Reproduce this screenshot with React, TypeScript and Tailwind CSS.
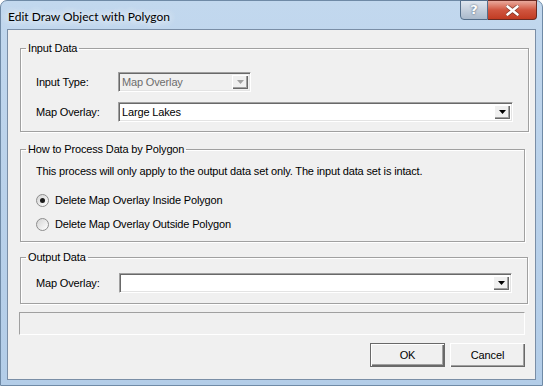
import React from 'react';

const sunken =
  'border border-t-[#a0a0a0] border-l-[#a0a0a0] border-b-white border-r-white shadow-[inset_1px_1px_0_#696969,inset_-1px_-1px_0_#e3e3e3]';
const raised =
  'bg-[#f0f0f0] shadow-[inset_1px_1px_0_#ffffff,inset_-1px_-1px_0_#696969,inset_-2px_-2px_0_#a0a0a0]';

const Arrow = ({ disabled }: { disabled?: boolean }) => (
  <svg width="7" height="4" viewBox="0 0 7 4">
    <path d="M0 0h7L3.5 4z" fill={disabled ? '#a0a0a0' : '#000'} />
  </svg>
);

const Combo = ({ value, width, disabled }: { value: string; width: string; disabled?: boolean }) => (
  <div className={`${width} h-[20px] flex items-stretch ${sunken} ${disabled ? 'bg-[#f0f0f0]' : 'bg-white'}`}>
    <div
      className={`flex-1 pl-[3px] flex items-center leading-[13px] ${disabled ? 'text-[#6d6d6d]' : 'text-black'}`}
    >
      {value}
    </div>
    <div className={`w-[16px] my-[2px] mr-[2px] flex items-center justify-center ${raised}`}>
      <Arrow disabled={disabled} />
    </div>
  </div>
);

const Group = ({ title, className, children }: { title: string; className: string; children: React.ReactNode }) => (
  <fieldset
    className={`ml-[12px] mr-[10px] border border-[#a0a0a0] shadow-[1px_1px_0_#ffffff,inset_1px_1px_0_#ffffff] ${className}`}
  >
    <legend className="ml-[5px] px-[2px] leading-[13px]">{title}</legend>
    <div className="px-[15px]">{children}</div>
  </fieldset>
);

const Radio = ({ checked, label }: { checked?: boolean; label: string }) => (
  <div className="flex items-center h-[16px] gap-[6px]">
    <div className="w-[13px] h-[13px] rounded-full border border-[#8d8d8d] bg-gradient-to-br from-[#d4d4d4] to-[#ffffff] flex items-center justify-center">
      {checked && <div className="w-[5px] h-[5px] rounded-full bg-[#1b1b1b]" />}
    </div>
    <span className="leading-[13px]">{label}</span>
  </div>
);

export default function App() {
  return (
    <div className="w-[543px] h-[386px] bg-white overflow-hidden">
      <div className="w-[543px] h-[386px] rounded-t-[7px] border border-[#6f8aa6] bg-gradient-to-b from-[#c2d8ee] via-[#b9d1ea] to-[#b3cde8] flex flex-col">
        {/* Title bar */}
        <div className="h-[28px] flex items-start">
          <div
            className="pl-[7px] pt-[8px] text-[12px] leading-[16px] text-black"
            style={{ fontFamily: 'Lato, "Open Sans", sans-serif', textShadow: '0 0 8px #fff, 0 0 8px #fff' }}
          >
            Edit Draw Object with Polygon
          </div>
          <div className="ml-auto mr-[5px] flex h-[20px] -mt-px">
            <div className="w-[28px] h-full rounded-bl-[4px] border border-[#546e8a] bg-gradient-to-b from-[#dfe6ef] via-[#c4cfdc] to-[#aab9cb] flex items-center justify-center text-[13px] font-bold text-white [text-shadow:0_0_2px_#33465c]" style={{ fontFamily: '"DejaVu Sans", sans-serif' }}>
              ?
            </div>
            <div className="w-[49px] h-full rounded-br-[4px] border border-l-0 border-[#6b2a22] bg-gradient-to-b from-[#e9a99c] via-[#d0553f] to-[#c13b22] flex items-center justify-center">
              <svg width="13" height="11" viewBox="0 0 13 11">
                <path d="M1.5 1.5l10 8M11.5 1.5l-10 8" stroke="#3a1a14" strokeWidth="4" strokeLinecap="round" opacity="0.5" />
                <path d="M1.5 1.5l10 8M11.5 1.5l-10 8" stroke="#fff" strokeWidth="2.6" strokeLinecap="round" />
              </svg>
            </div>
          </div>
        </div>

        {/* Client area */}
        <div
          className="mx-[6px] h-[351px] border border-[#7a8ea6] bg-[#f0f0f0] text-[11px] tracking-[-0.15px] text-black flex flex-col"
          style={{ fontFamily: '"Liberation Sans", Arial, sans-serif' }}
        >
          <Group title="Input Data" className="mt-[12px] pb-[9px]">
            <div className="flex items-center mt-[17px]">
              <span className="w-[82px] leading-[13px]">Input Type:</span>
              <Combo value="Map Overlay" width="w-[133px]" disabled />
            </div>
            <div className="flex items-center mt-[10px]">
              <span className="w-[82px] leading-[13px]">Map Overlay:</span>
              <Combo value="Large Lakes" width="w-[395px]" />
            </div>
          </Group>

          <Group title="How to Process Data by Polygon" className="mt-[11px] pb-[9px]">
            <div className="mt-[9px] leading-[13px]">
              This process will only apply to the output data set only. The input data set is intact.
            </div>
            <div className="mt-[14px]">
              <Radio checked label="Delete Map Overlay Inside Polygon" />
            </div>
            <div className="mt-[8px]">
              <Radio label="Delete Map Overlay Outside Polygon" />
            </div>
          </Group>

          <Group title="Output Data" className="mt-[9px] pb-[10px]">
            <div className="flex items-center mt-[9px]">
              <span className="w-[83px] leading-[13px]">Map Overlay:</span>
              <Combo value="" width="w-[393px]" />
            </div>
          </Group>

          <div className="mt-[8px] ml-[11px] mr-[10px] h-[23px] border border-t-[#a0a0a0] border-l-[#a0a0a0] border-b-white border-r-white" />

          <div className="mt-[8px] mr-[10px] flex justify-end gap-[5px]">
            <button className={`w-[75px] h-[24px] border border-[#696969] ${raised} leading-[13px]`}>OK</button>
            <button className={`w-[75px] h-[24px] ${raised} leading-[13px]`}>Cancel</button>
          </div>
        </div>
      </div>
    </div>
  );
}
